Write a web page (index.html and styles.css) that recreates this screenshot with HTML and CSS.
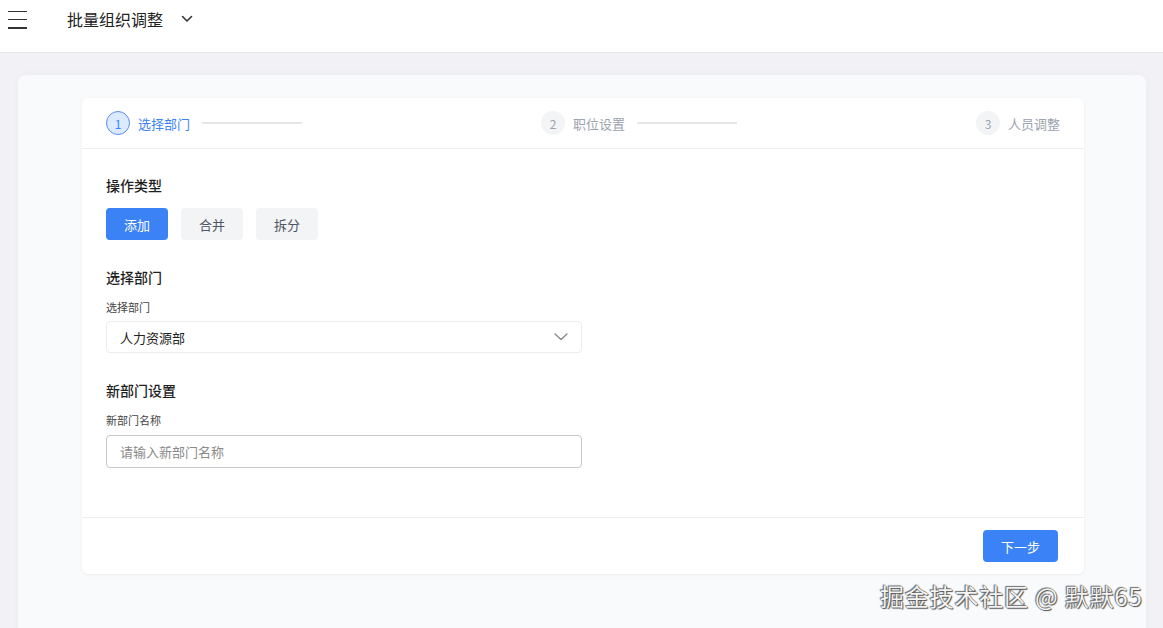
FILE: index.html
```html
<!DOCTYPE html>
<html lang="zh-CN">
<head>
  <meta charset="UTF-8">
  <meta name="viewport" content="width=device-width, initial-scale=1.0">
  <title>批量组织调整</title>
  <link rel="stylesheet" href="styles.css">
</head>
<body>
  <header class="top-bar">
    <div class="top-row">
      <button class="menu-btn" aria-label="菜单">
        <span></span><span></span><span></span>
      </button>
      <div class="page-title">
        批量组织调整
        <svg class="title-caret" width="12" height="8" viewBox="0 0 12 8"><path d="M1.5 1.5 L6 6 L10.5 1.5" fill="none" stroke="#333" stroke-width="1.6" stroke-linecap="round" stroke-linejoin="round"/></svg>
      </div>
    </div>
  </header>

  <main class="page">
    <div class="panel">
      <div class="wizard-card">
        <div class="steps">
          <div class="step active">
            <span class="step-num">1</span>
            <span class="step-label">选择部门</span>
            <span class="step-line"></span>
          </div>
          <div class="step">
            <span class="step-num">2</span>
            <span class="step-label">职位设置</span>
            <span class="step-line"></span>
          </div>
          <div class="step">
            <span class="step-num">3</span>
            <span class="step-label">人员调整</span>
          </div>
        </div>

        <div class="wizard-body">
          <div class="section">
            <h3 class="section-title">操作类型</h3>
            <div class="type-group">
              <button class="type-btn selected">添加</button>
              <button class="type-btn">合并</button>
              <button class="type-btn">拆分</button>
            </div>
          </div>

          <div class="section">
            <h3 class="section-title">选择部门</h3>
            <label class="field-label">选择部门</label>
            <div class="select-box">
              <span>人力资源部</span>
              <svg width="14" height="8" viewBox="0 0 14 8"><path d="M1 1 L7 6.5 L13 1" fill="none" stroke="#8a8a8a" stroke-width="1.4" stroke-linecap="round" stroke-linejoin="round"/></svg>
            </div>
          </div>

          <div class="section">
            <h3 class="section-title">新部门设置</h3>
            <label class="field-label" for="deptName">新部门名称</label>
            <input class="text-input" id="deptName" type="text" placeholder="请输入新部门名称">
          </div>
        </div>

        <div class="wizard-footer">
          <button class="next-btn">下一步</button>
        </div>
      </div>
    </div>
  </main>

  <div class="watermark">掘金技术社区 @ 默默65</div>
</body>
</html>
```

FILE: styles.css
```css
body {
  margin: 0;
  font-family: "Noto Sans CJK SC", "Noto Sans", sans-serif;
  background-color: #f2f2f6;
  color: #222;
  height: 628px;
  overflow: hidden;
}

.top-bar {
  height: 52px;
  background: #ffffff;
  border-bottom: 1px solid #e6e6e6;
}

.top-row {
  height: 38px;
  display: flex;
  align-items: center;
  padding-left: 8px;
}

.menu-btn {
  width: 20px;
  height: 18px;
  padding: 0;
  border: none;
  background: none;
  display: flex;
  flex-direction: column;
  justify-content: space-between;
  margin-top: 1px;
}

.menu-btn span {
  display: block;
  height: 1.6px;
  width: 19px;
  background: #333;
}

.page-title {
  margin-left: 39px;
  font-size: 16px;
  color: #222;
  display: flex;
  align-items: center;
}

.title-caret {
  margin-left: 18px;
}

.page {
  padding: 22px 17px 0 18px;
}

.panel {
  background: #f9fafb;
  border-radius: 8px 8px 0 0;
  padding: 23px 62px 80px 64px;
  box-shadow: 0 0 10px rgba(0, 0, 0, 0.03);
}

.wizard-card {
  background: #ffffff;
  border-radius: 6px;
  box-shadow: 0 1px 3px rgba(0, 0, 0, 0.06);
}

.steps {
  height: 50px;
  display: flex;
  align-items: center;
  justify-content: space-between;
  padding: 0 24px;
  border-bottom: 1px solid #eeeeee;
}

.step {
  display: flex;
  align-items: center;
}

.step-num {
  width: 24px;
  height: 24px;
  border-radius: 50%;
  background: #f3f4f6;
  color: #9ca3af;
  font-size: 12px;
  display: flex;
  align-items: center;
  justify-content: center;
  box-sizing: border-box;
}

.step-label {
  margin-left: 8px;
  font-size: 13px;
  color: #9ca3af;
}

.step-line {
  width: 100px;
  height: 2px;
  background: #e5e7eb;
  margin-left: 12px;
}

.step.active .step-num {
  background: #dbeafe;
  border: 1px solid #5b8def;
  color: #3b82f6;
}

.step.active .step-label {
  color: #3b82f6;
}

.wizard-body {
  padding: 26px 24px 49px;
}

.section + .section {
  margin-top: 27px;
}

.section-title {
  margin: 0;
  font-size: 14px;
  font-weight: 500;
  line-height: 20px;
  color: #1f1f1f;
}

.type-group {
  display: flex;
  gap: 13px;
  margin-top: 13px;
}

.type-btn {
  height: 32px;
  padding: 0 18px;
  border: none;
  border-radius: 4px;
  background: #f3f4f6;
  color: #4b5563;
  font-family: inherit;
  font-size: 13px;
}

.type-btn.selected {
  background: #3b82f6;
  color: #ffffff;
}

.field-label {
  display: block;
  margin-top: 12px;
  font-size: 11px;
  line-height: 16px;
  color: #444;
}

.select-box {
  margin-top: 6px;
  width: 476px;
  height: 32px;
  box-sizing: border-box;
  border: 1px solid #ededed;
  border-radius: 4px;
  padding: 0 13px;
  display: flex;
  align-items: center;
  justify-content: space-between;
  font-size: 13px;
  color: #222;
}

.text-input {
  display: block;
  margin-top: 7px;
  width: 476px;
  height: 33px;
  box-sizing: border-box;
  border: 1px solid #c8c8c8;
  border-radius: 4px;
  padding: 0 13px;
  font-family: inherit;
  font-size: 13px;
  color: #222;
}

.text-input::placeholder {
  color: #8a8a8a;
}

.wizard-footer {
  border-top: 1px solid #eeeeee;
  padding: 12px 26px 12px;
  display: flex;
  justify-content: flex-end;
}

.next-btn {
  height: 32px;
  padding: 0 18px;
  border: none;
  border-radius: 4px;
  background: #3b82f6;
  color: #ffffff;
  font-family: inherit;
  font-size: 13px;
}

.watermark {
  position: absolute;
  left: 880px;
  top: 578px;
  font-size: 24px;
  letter-spacing: 0.8px;
  color: #f4f4f4;
  text-shadow: 0 0 1px #333, 1px 1px 1px #555, -1px -1px 1px #777;
  white-space: nowrap;
}
```
